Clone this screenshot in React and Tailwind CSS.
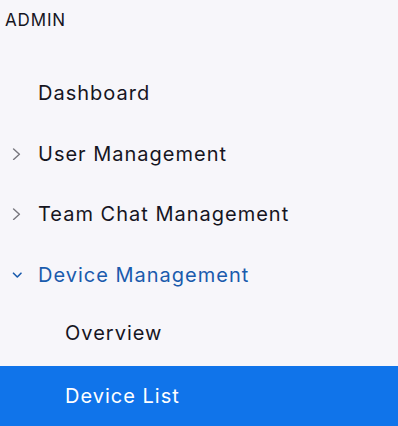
const font = { fontFamily: 'Inter, "Noto Sans", sans-serif' }

function Chevron({ open }) {
  return open ? (
    <svg width="12" height="12" viewBox="0 0 12 12" fill="none" className="text-[#1a5bad]">
      <path d="M3.5 4.2 7.3 8 11 4.2" stroke="currentColor" strokeWidth="1.6" strokeLinecap="round" strokeLinejoin="round" />
    </svg>
  ) : (
    <svg width="12" height="12" viewBox="0 0 12 12" fill="none" className="text-[#77767d]">
      <path d="M3.6 1 9.4 6.2 3.6 11.4" stroke="currentColor" strokeWidth="1.4" strokeLinecap="round" strokeLinejoin="round" />
    </svg>
  )
}

function NavItem({ label, chevron, open, sub, active, h = 'h-[60px]', extra = '' }) {
  const color = active ? 'text-white' : open ? 'text-[#1a5bad]' : 'text-[#16151f]'
  return (
    <div className={`flex items-center ${h} ${extra} ${active ? 'bg-[#1074ea]' : ''} ${sub ? 'pl-[65px]' : 'pl-[10px]'}`}>
      {!sub && (
        <span className="w-[28px] flex items-center">
          {chevron && <Chevron open={open} />}
        </span>
      )}
      <span className={`text-[20px] tracking-[0.05em] leading-none ${color}`}>{label}</span>
    </div>
  )
}

export default function App() {
  return (
    <div className="w-[398px] h-[426px] bg-[#f7f6fa] overflow-hidden" style={font}>
      <div className="h-[41px] pl-[5px] flex items-center text-[17px] tracking-[0.05em] text-[#16151f]">ADMIN</div>
      <div className="pt-[22px]">
        <NavItem label="Dashboard" />
        <NavItem label="User Management" chevron h="h-[61px]" />
        <NavItem label="Team Chat Management" chevron />
        <NavItem label="Device Management" chevron open h="h-[61px]" />
        <NavItem label="Overview" sub h="h-[61px]" extra="pb-[6px]" />
        <NavItem label="Device List" sub active />
      </div>
    </div>
  )
}
